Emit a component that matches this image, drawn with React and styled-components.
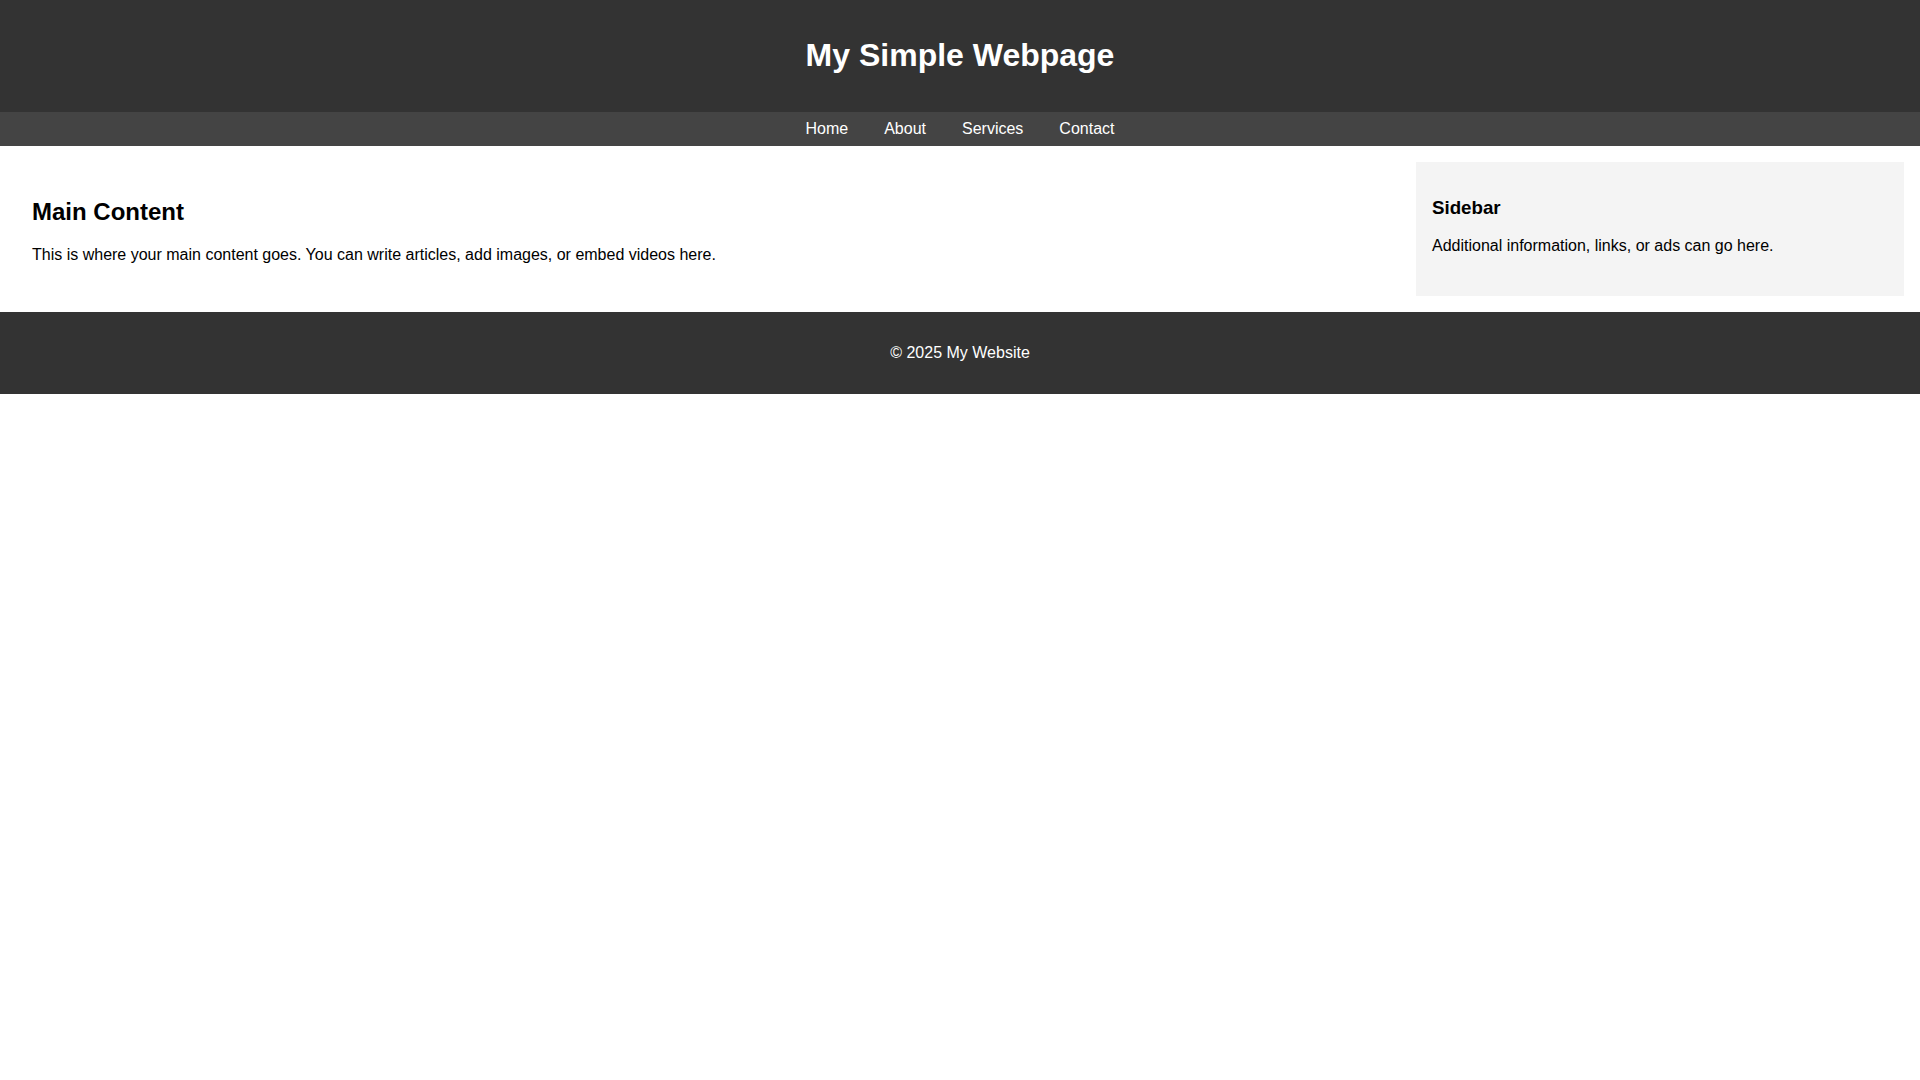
import React from "react";
import styled, { createGlobalStyle } from "styled-components";

const GlobalStyle = createGlobalStyle`
  body {
    margin: 0;
    font-family: "Liberation Sans", Arial, sans-serif;
    background: #fff;
    color: #000;
  }
`;

const Header = styled.header`
  background-color: #333;
  color: #fff;
  text-align: center;
  padding: 1rem;

  h1 {
    font-size: 2em;
    margin: 0.67em 0;
  }
`;

const Nav = styled.nav`
  background-color: #444;
  display: flex;
  justify-content: center;
  gap: 36px;
  padding: 0.5rem 0;
`;

const NavLink = styled.a`
  color: #fff;
  text-decoration: none;
  font-size: 16px;
`;

const Container = styled.div`
  display: flex;
  padding: 1rem;
`;

const Main = styled.main`
  flex: 3;
  padding: 1rem;

  h2 {
    font-size: 1.5em;
    margin: 0.83em 0;
  }
`;

const Sidebar = styled.aside`
  flex: 1;
  padding: 1rem;
  background-color: #f4f4f4;

  h3 {
    font-size: 1.17em;
    margin: 1em 0;
  }
`;

const Footer = styled.footer`
  background-color: #333;
  color: #fff;
  text-align: center;
  padding: 1rem;
`;

export default function App() {
  const links = ["Home", "About", "Services", "Contact"];
  return (
    <>
      <GlobalStyle />
      <Header>
        <h1>My Simple Webpage</h1>
      </Header>
      <Nav>
        {links.map((l) => (
          <NavLink key={l} href="#">
            {l}
          </NavLink>
        ))}
      </Nav>
      <Container>
        <Main>
          <h2>Main Content</h2>
          <p>
            This is where your main content goes. You can write articles, add
            images, or embed videos here.
          </p>
        </Main>
        <Sidebar>
          <h3>Sidebar</h3>
          <p>Additional information, links, or ads can go here.</p>
        </Sidebar>
      </Container>
      <Footer>
        <p>&copy; 2025 My Website</p>
      </Footer>
    </>
  );
}
